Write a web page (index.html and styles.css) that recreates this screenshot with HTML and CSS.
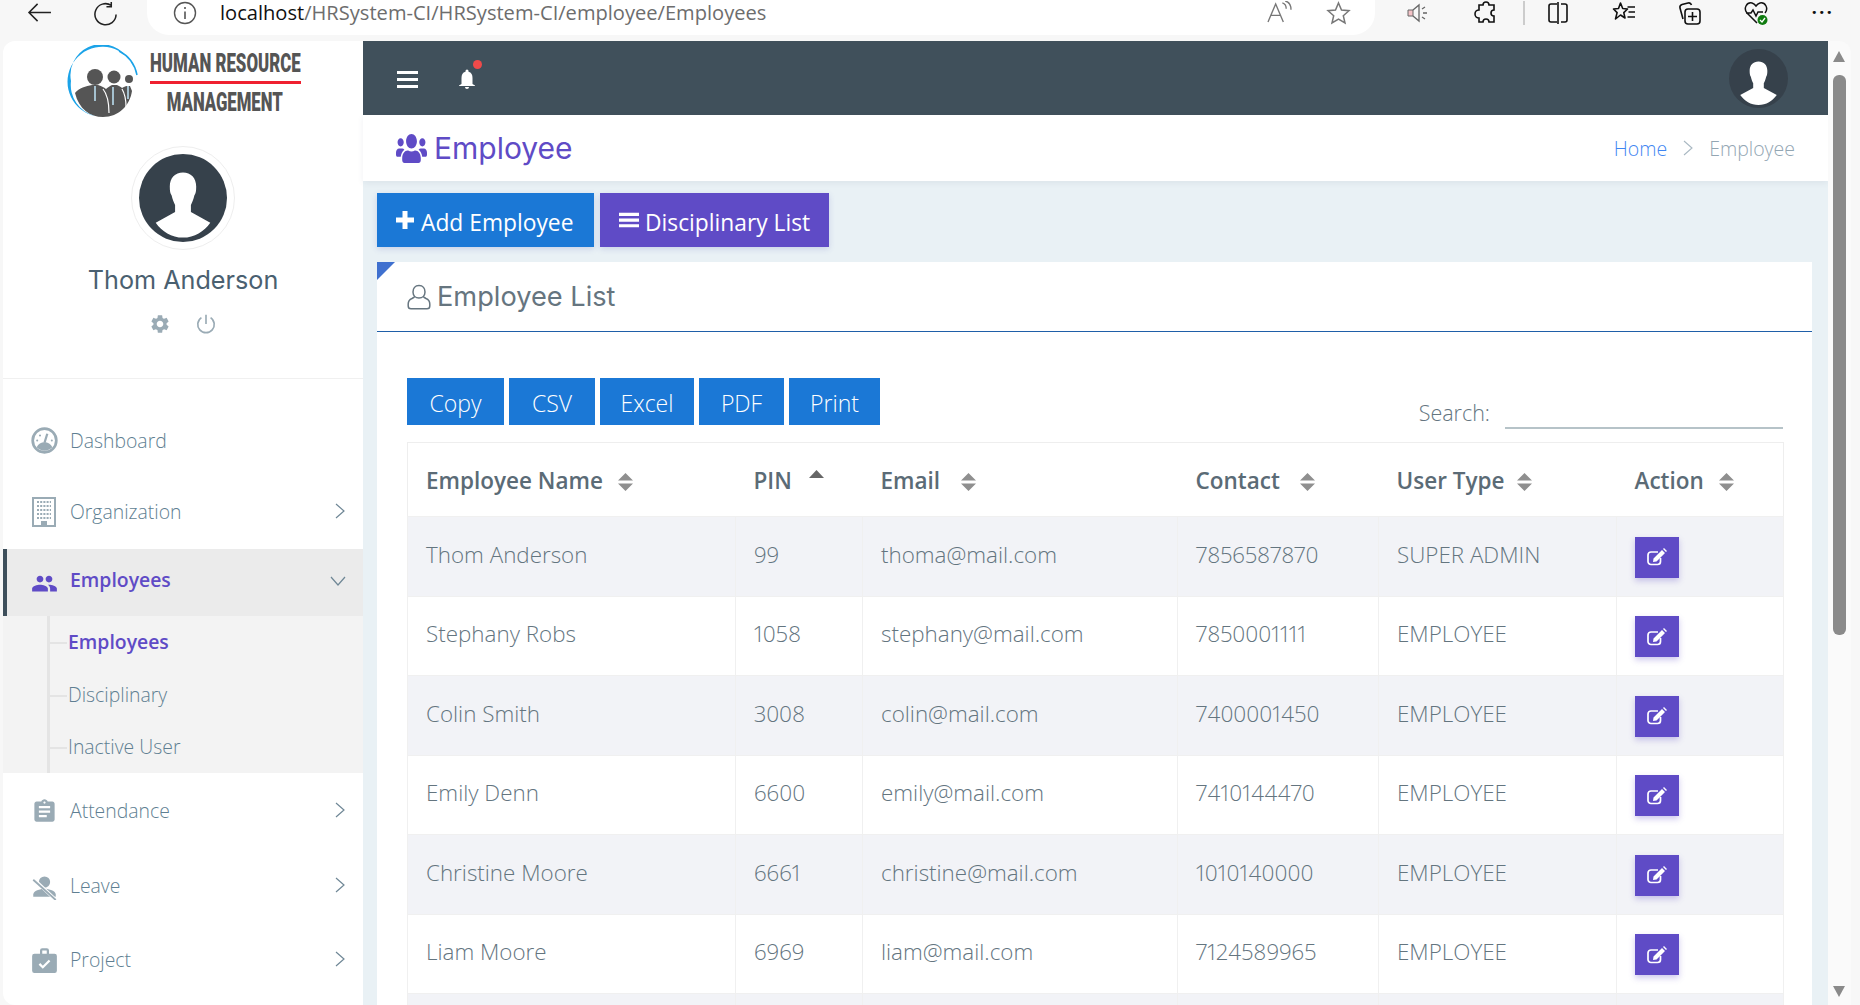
FILE: index.html
```html
<!DOCTYPE html>
<html lang="en">
<head>
<meta charset="utf-8">
<title>Employee</title>
<link rel="stylesheet" href="styles.css">
</head>
<body>
<svg class="defs" width="0" height="0" aria-hidden="true">
  <symbol id="silhouette" viewBox="0 0 100 100">
    <circle cx="50" cy="50" r="50" fill="#36414b"/>
    <path fill="#fff" d="M50 21c-9 0-15 6-15 16 0 5 .5 8 2 10 1 5 3 9 4 11v8L19 78c7 10 18 17 31 17s24-7 31-17L59 66v-8c1-2 3-6 4-11 1.500-2 2-5 2-10 0-10-6-16-15-16z"/>
  </symbol>
  <symbol id="sort" viewBox="0 0 15 18"><path fill="#8f8f8f" d="M7.500 0 15 7.500H0zM0 10.500h15L7.500 18z"/></symbol>
  <symbol id="chev-r" viewBox="0 0 12 18"><path fill="none" stroke="#6f8796" stroke-width="1.200" d="M2 2l8 7-8 7"/></symbol>
  <symbol id="edit" viewBox="0 0 20 18"><path fill="none" stroke="#fff" stroke-width="1.700" d="M13.500 10v3.500a3 3 0 0 1-3 3H4a3 3 0 0 1-3-3V7a3 3 0 0 1 3-3h7"/><path fill="#fff" d="M6.500 10.500 15 2l3 3-8.500 8.500-3.500.5zM16 1l1-1 3 3-1 1z"/></symbol>
</svg>

<header class="chrome">
  <svg class="chrome-icon back" viewBox="0 0 26 22"><path fill="none" stroke="#222" stroke-width="1.600" d="M25 11H2M11 2l-9 9 9 9"/></svg>
  <svg class="chrome-icon reload" viewBox="0 0 26 26"><path fill="none" stroke="#222" stroke-width="1.600" d="M19 3.500A11 11 0 1 0 24 13M19 0v5h-5"/></svg>
  <div class="address">
    <svg class="info" viewBox="0 0 24 24"><circle cx="12" cy="12" r="10.500" fill="none" stroke="#555" stroke-width="1.400"/><path stroke="#555" stroke-width="1.600" d="M12 10.500V18M12 6v2"/></svg>
    <span class="url"><span class="host">localhost</span>/HRSystem-CI/HRSystem-CI/employee/Employees</span>
    <svg class="addr-read" viewBox="0 0 26 24"><path fill="none" stroke="#777" stroke-width="1.400" d="M1 22 9 3l8 19M4 15h10M16 2c3 1 4 3 4 6M19 0c4 1 6 4 6 9"/></svg>
    <svg class="addr-star" viewBox="0 0 24 24"><path fill="none" stroke="#777" stroke-width="1.500" d="m12 2 3 7 7.500.7-5.700 5 1.700 7.300-6.500-3.900L5.500 22l1.700-7.300-5.700-5L9 9z"/></svg>
  </div>
  <div class="tools">
    <svg class="tool tool-first" viewBox="0 0 24 24"><path fill="#f3c2c6" stroke="#666" d="M3 9h5v6H3z"/><path fill="none" stroke="#666" stroke-width="1.300" d="m8 9 6-5v16l-6-5M17 8l3-2M18 12h4M17 16l3 2"/></svg>
    <svg class="tool" viewBox="0 0 24 24"><path fill="none" stroke="#111" stroke-width="1.600" d="M9 4a3 3 0 0 1 6 0h5v5a3 3 0 0 0 0 6v6h-5a3 3 0 0 0-6 0H5v-4a3 3 0 0 1 0-8V4z"/></svg>
    <span class="tool-sep"></span>
    <svg class="tool" viewBox="0 0 24 24"><path fill="none" stroke="#111" stroke-width="1.600" d="M11 3H5a2 2 0 0 0-2 2v14a2 2 0 0 0 2 2h6M15 3h4a2 2 0 0 1 2 2v14a2 2 0 0 1-2 2h-4M12 1v22"/></svg>
    <svg class="tool" viewBox="0 0 24 24"><path fill="none" stroke="#111" stroke-width="1.600" stroke-linejoin="round" d="m8.500 2 2.200 5.500 4.800.5-3.700 3.600 1.200 5.400-4.500-3-5 4 1.600-6.400L1.500 8l5-.5zM15.500 6H23M16.500 11H23M15.500 16H23"/></svg>
    <svg class="tool" viewBox="0 0 24 24"><path fill="none" stroke="#111" stroke-width="1.600" d="M5 18 2 7c-.5-2 .5-3 2-3.500L10 2c2-.5 3 .5 3.500 2"/><rect x="7" y="8" width="15" height="15" rx="3" fill="#f7f7f7" stroke="#111" stroke-width="1.600"/><path stroke="#111" stroke-width="1.600" d="M14.500 11v9M10 15.500h9"/></svg>
    <svg class="tool" viewBox="0 0 24 24"><path fill="none" stroke="#111" stroke-width="1.500" d="M13 22 3 12C-1 7 3 1 8 2c2 .5 3 1.500 4 3 1-1.500 2-2.500 4-3 5-1 9 5 5 10M2 12h5l2-3 3 6 2-4h5"/><circle cx="18.500" cy="19" r="5" fill="#107c10"/><path fill="none" stroke="#fff" stroke-width="1.300" d="m16 19 2 2 3-4"/></svg>
    <span class="tool-dots">&#8226;&#8226;&#8226;</span>
  </div>
</header>

<div class="window">
  <aside class="sidebar">
    <div class="brand">
      <svg class="logo-mark" viewBox="0 0 72 72">
        <circle cx="28" cy="32" r="8" fill="#555"/><circle cx="47" cy="32" r="6.500" fill="#555"/><circle cx="62" cy="34" r="4" fill="#555"/>
        <path fill="#555" d="M8 48c4-5 11-7 17-8h6c3 1 6 2 8 4 2-2 4-3 6-4h5c2 1 4 2 5 3 2-1 3-2 5-2h3l2 5c-2 14-13 26-29 26-13 0-24-8-28-24z"/>
        <path fill="none" stroke="#fff" stroke-width="1.200" d="M36 44c4 5 6 14 6 24M55 44c3 5 4 10 4 18"/>
        <path fill="none" stroke="#b9dcee" stroke-width="1.600" d="M28 41v15M46 42v18M61 41v13"/>
        <path fill="#1ba3e8" d="M58 10A35 35 0 1 0 28 71 32 32 0 0 1 4 36 31 31 0 0 1 58 10z"/>
        <path fill="none" stroke="#1ba3e8" stroke-width="1.500" d="M52 6c10 5 16 14 18 24"/>
      </svg>
      <svg class="logo-text" viewBox="0 0 151 76">
        <g transform="scale(.62 1)">
          <text class="logo-word" x="0" y="27" textLength="243" lengthAdjust="spacingAndGlyphs">HUMAN RESOURCE</text>
          <text class="logo-word" x="27" y="66" textLength="187" lengthAdjust="spacingAndGlyphs">MANAGEMENT</text>
        </g>
        <rect x="0" y="36" width="151" height="3" fill="#ef2030"/>
      </svg>
    </div>
    <div class="profile">
      <div class="avatar-ring"><svg class="avatar"><use href="#silhouette"/></svg></div>
      <div class="profile-name">Thom Anderson</div>
      <div class="profile-actions">
        <svg class="pa-icon" viewBox="0 0 24 24"><path fill="#9aabb5" d="M19.140 12.940c.04-.3.06-.61.06-.94 0-.32-.02-.64-.07-.94l2.030-1.580c.18-.14.23-.41.12-.61l-1.920-3.320c-.12-.22-.37-.29-.59-.22l-2.390.96c-.5-.38-1.030-.7-1.620-.94l-.36-2.540c-.04-.24-.24-.41-.48-.41h-3.840c-.24 0-.43.17-.47.41l-.36 2.540c-.59.24-1.130.57-1.620.94l-2.390-.96c-.22-.08-.47 0-.59.22L2.740 8.870c-.12.21-.08.47.12.61l2.030 1.580c-.05.3-.09.63-.09.94s.02.64.07.94l-2.030 1.580c-.18.14-.23.41-.12.61l1.920 3.320c.12.22.37.29.59.22l2.390-.96c.5.38 1.030.7 1.620.94l.36 2.540c.05.24.24.41.48.41h3.840c.24 0 .44-.17.47-.41l.36-2.540c.59-.24 1.130-.56 1.620-.94l2.390.96c.22.08.47 0 .59-.22l1.920-3.320c.12-.22.07-.47-.12-.61l-2.010-1.580zM12 15.600c-1.980 0-3.600-1.620-3.600-3.600s1.620-3.600 3.600-3.600 3.600 1.620 3.600 3.600-1.620 3.600-3.600 3.600z"/></svg>
        <svg class="pa-icon" viewBox="0 0 24 24"><path fill="none" stroke="#9aabb5" stroke-width="1.800" d="M7 5a9 9 0 1 0 10 0M12 2v10"/></svg>
      </div>
    </div>
    <nav class="menu">
      <a class="item item-first">
        <svg class="item-icon" viewBox="0 0 24 24"><circle cx="12" cy="12" r="10.500" fill="#fff" stroke="#9aabb5" stroke-width="2.400"/><path fill="#9aabb5" d="M5 18c1.500-3 4-4.500 7-4.500s5.500 1.500 7 4.500c-2 2-4.500 3-7 3s-5-1-7-3z"/><path stroke="#9aabb5" stroke-width="2" d="m12 14 2.500-8"/><path stroke="#9aabb5" stroke-width="1.800" stroke-linecap="round" d="M5.500 12h.01M8 7.500h.01M18.500 12h.01"/></svg>
        <span>Dashboard</span>
      </a>
      <a class="item item-org">
        <svg class="item-icon icon-org" viewBox="0 0 24 30" preserveAspectRatio="none"><path fill="#fff" stroke="#9aabb5" stroke-width="2" d="M1 1h22v28H1z"/><path stroke="#9aabb5" stroke-width="2" stroke-dasharray="2 1.200" d="M5 5h14M5 9h14M5 13h14M5 17h14M5 21h14"/><path fill="#9aabb5" d="M9 24h6v6H9z"/></svg>
        <span>Organization</span>
        <svg class="chev"><use href="#chev-r"/></svg>
      </a>
      <a class="item item-open">
        <svg class="item-icon" viewBox="0 0 24 24"><path fill="#5f4bc6" d="M16 11c1.660 0 2.990-1.340 2.990-3S17.660 5 16 5c-1.660 0-3 1.340-3 3s1.340 3 3 3zm-8 0c1.660 0 2.990-1.340 2.990-3S9.660 5 8 5C6.340 5 5 6.340 5 8s1.340 3 3 3zm0 2c-2.330 0-7 1.170-7 3.500V19h14v-2.500c0-2.330-4.670-3.500-7-3.500zm8 0c-.29 0-.62.02-.97.05 1.160.84 1.970 1.970 1.970 3.450V19h6v-2.500c0-2.330-4.670-3.500-7-3.500z"/></svg>
        <span>Employees</span>
        <svg class="chev-down" viewBox="0 0 18 12"><path fill="none" stroke="#6f8796" stroke-width="1.200" d="m2 2 7 8 7-8"/></svg>
      </a>
      <ul class="submenu">
        <li class="sub-active">Employees</li>
        <li>Disciplinary</li>
        <li>Inactive User</li>
      </ul>
      <a class="item item-after">
        <svg class="item-icon" viewBox="0 0 24 24"><path fill="#9aabb5" d="M19 3h-4.180C14.400 1.840 13.300 1 12 1c-1.300 0-2.400.84-2.820 2H5c-1.100 0-2 .9-2 2v14c0 1.100.9 2 2 2h14c1.100 0 2-.9 2-2V5c0-1.100-.9-2-2-2zm-7 0c.55 0 1 .45 1 1s-.45 1-1 1-1-.45-1-1 .45-1 1-1zm2 14H7v-2h7v2zm3-4H7v-2h10v2zm0-4H7V7h10v2z"/></svg>
        <span>Attendance</span>
        <svg class="chev"><use href="#chev-r"/></svg>
      </a>
      <a class="item item-after">
        <svg class="item-icon" viewBox="0 0 24 24"><circle cx="12" cy="8" r="5" fill="#9aabb5"/><path fill="#9aabb5" d="M2 21v-2c0-3 6-5 10-5s10 2 10 5v2z"/><path stroke="#fff" stroke-width="3" d="m2 5 20 19"/><path stroke="#9aabb5" stroke-width="1.600" d="m2 6 20 18"/></svg>
        <span>Leave</span>
        <svg class="chev"><use href="#chev-r"/></svg>
      </a>
      <a class="item item-after">
        <svg class="item-icon" viewBox="0 0 24 24"><path fill="#9aabb5" d="M3 6h5V3a2 2 0 0 1 2-2h4a2 2 0 0 1 2 2v3h5a2 2 0 0 1 2 2v13a2 2 0 0 1-2 2H3a2 2 0 0 1-2-2V8a2 2 0 0 1 2-2zm7-3v3h4V3z"/><path fill="none" stroke="#fff" stroke-width="2" d="m7.500 15 3 3 6-6"/></svg>
        <span>Project</span>
        <svg class="chev"><use href="#chev-r"/></svg>
      </a>
    </nav>
  </aside>

  <main class="main">
    <div class="topbar">
      <svg class="burger" viewBox="0 0 21 17"><path fill="#fff" d="M0 0h21v3H0zM0 7h21v3H0zM0 14h21v3H0z"/></svg>
      <span class="bell-wrap">
        <svg class="bell" viewBox="0 0 18 20"><path fill="#fff" d="M9 20c1.100 0 2-.9 2-2H7c0 1.100.9 2 2 2zm5.500-5V9c0-3.100-1-5.600-4-6.300V2a1.500 1.500 0 0 0-3 0v.7c-3 .7-4 3.200-4 6.300v6L1 16.500v.5h16v-.5z"/></svg>
        <span class="bell-dot"></span>
      </span>
      <svg class="top-avatar"><use href="#silhouette"/></svg>
    </div>
    <div class="page-head">
      <h1 class="page-title">
        <svg class="title-icon" viewBox="0 32 640 448" preserveAspectRatio="none"><path fill="#5f4bc6" d="M96 224c35.300 0 64-28.700 64-64s-28.700-64-64-64-64 28.700-64 64 28.700 64 64 64zm448 0c35.300 0 64-28.700 64-64s-28.700-64-64-64-64 28.700-64 64 28.700 64 64 64zm32 32h-64c-17.600 0-33.500 7.100-45.100 18.600 40.300 22.100 68.900 62 75.100 109.400h66c17.700 0 32-14.300 32-32v-32c0-35.300-28.700-64-64-64zm-256 0c61.900 0 112-50.100 112-112S381.900 32 320 32 208 82.100 208 144s50.100 112 112 112zm76.800 32h-8.300c-20.800 10-43.900 16-68.500 16s-47.600-6-68.500-16h-8.300C179.600 288 128 339.600 128 403.200V432c0 26.500 21.500 48 48 48h288c26.500 0 48-21.500 48-48v-28.800c0-63.600-51.600-115.200-115.200-115.200zm-223.700-13.400C161.500 263.100 145.600 256 128 256H64c-35.300 0-64 28.700-64 64v32c0 17.700 14.300 32 32 32h65.900c6.300-47.400 34.900-87.300 75.200-109.400z"/></svg>
        Employee
      </h1>
      <div class="crumbs">
        <a class="crumb-link">Home</a>
        <svg class="crumb-sep" viewBox="0 0 10 18"><path fill="none" stroke="#a9b8c2" stroke-width="1.100" d="m1 2 8 7-8 7"/></svg>
        <span class="crumb-cur">Employee</span>
      </div>
    </div>
    <div class="content">
      <div class="actions">
        <a class="btn btn-blue"><svg class="btn-ico" viewBox="0 0 20 20"><path fill="#fff" d="M7.500 1h5v6.500H19v5h-6.500V19h-5v-6.500H1v-5h6.500z"/></svg>Add Employee</a>
        <a class="btn btn-purple"><svg class="btn-ico" viewBox="0 0 22 18"><path fill="#fff" d="M0 1h22v3.500H0zM0 7.300h22v3.500H0zM0 13.600h22v3.500H0z"/></svg>Disciplinary List</a>
      </div>
      <section class="card">
        <span class="corner"></span>
        <div class="card-head">
          <svg class="card-ico" viewBox="0 0 24 26"><path fill="none" stroke="#66757f" stroke-width="1.500" d="M12 1.500c-4 0-6 3-6 6.500s2.500 6 6 6 6-2.500 6-6-2-6.500-6-6.500zM7.500 13 5 14.500c-2.500 1-3.800 3-3.800 5.500v2c0 1.500 1 2.800 2.800 2.800h16c1.800 0 2.800-1.300 2.800-2.800v-2c0-2.500-1.300-4.500-3.800-5.500L16.500 13"/></svg>
          <h2 class="card-title">Employee List</h2>
        </div>
        <div class="card-body">
          <div class="toolbar">
            <div class="export">
              <a class="ex-btn ex-copy">Copy</a>
              <a class="ex-btn ex-csv">CSV</a>
              <a class="ex-btn ex-excel">Excel</a>
              <a class="ex-btn ex-pdf">PDF</a>
              <a class="ex-btn ex-print">Print</a>
            </div>
            <label class="search"><span>Search:</span><span class="search-input"></span></label>
          </div>
          <table class="grid">
            <colgroup>
              <col class="c-name"><col class="c-pin"><col class="c-email"><col class="c-contact"><col class="c-type"><col class="c-action">
            </colgroup>
            <thead>
              <tr>
                <th>Employee Name<svg class="sort"><use href="#sort"/></svg></th>
                <th>PIN<svg class="sort-up" viewBox="0 0 15 8"><path fill="#666" d="M7.500 0 15 8H0z"/></svg></th>
                <th>Email<svg class="sort sort-email"><use href="#sort"/></svg></th>
                <th>Contact<svg class="sort sort-contact"><use href="#sort"/></svg></th>
                <th>User Type<svg class="sort sort-type"><use href="#sort"/></svg></th>
                <th>Action<svg class="sort"><use href="#sort"/></svg></th>
              </tr>
            </thead>
            <tbody>
              <tr><td>Thom Anderson</td><td>99</td><td>thoma@mail.com</td><td>7856587870</td><td>SUPER ADMIN</td><td><a class="edit"><svg class="edit-ico"><use href="#edit"/></svg></a></td></tr>
              <tr><td>Stephany Robs</td><td>1058</td><td>stephany@mail.com</td><td>7850001111</td><td>EMPLOYEE</td><td><a class="edit"><svg class="edit-ico"><use href="#edit"/></svg></a></td></tr>
              <tr><td>Colin Smith</td><td>3008</td><td>colin@mail.com</td><td>7400001450</td><td>EMPLOYEE</td><td><a class="edit"><svg class="edit-ico"><use href="#edit"/></svg></a></td></tr>
              <tr><td>Emily Denn</td><td>6600</td><td>emily@mail.com</td><td>7410144470</td><td>EMPLOYEE</td><td><a class="edit"><svg class="edit-ico"><use href="#edit"/></svg></a></td></tr>
              <tr><td>Christine Moore</td><td>6661</td><td>christine@mail.com</td><td>1010140000</td><td>EMPLOYEE</td><td><a class="edit"><svg class="edit-ico"><use href="#edit"/></svg></a></td></tr>
              <tr><td>Liam Moore</td><td>6969</td><td>liam@mail.com</td><td>7124589965</td><td>EMPLOYEE</td><td><a class="edit"><svg class="edit-ico"><use href="#edit"/></svg></a></td></tr>
              <tr><td></td><td></td><td></td><td></td><td></td><td></td></tr>
            </tbody>
          </table>
        </div>
      </section>
    </div>
  </main>

  <div class="scrollbar">
    <span class="sb-up"></span>
    <span class="sb-thumb"></span>
    <span class="sb-down"></span>
  </div>
</div>
</body>
</html>
```

FILE: styles.css
```css
* { box-sizing: border-box; }
html, body { margin: 0; height: 1005px; overflow: hidden; }
body {
  background: #f7f7f7;
  font-family: "Open Sans", "Liberation Sans", sans-serif;
  font-variant-numeric: proportional-nums;
  color: #6b7a85;
  display: flex;
  flex-direction: column;
}
.defs { position: absolute; }
a { text-decoration: none; }

/* browser chrome */
.chrome { height: 41px; flex: none; display: flex; align-items: flex-start; padding-left: 27px; }
.chrome-icon { flex: none; margin-top: 2px; }
.back { width: 25px; height: 21px; }
.reload { width: 25px; height: 25px; margin-left: 41px; }
.address {
  width: 1228px; height: 35px; margin-left: 29px; flex: none;
  background: #fff; border-radius: 0 0 22px 22px;
  display: flex; align-items: flex-start; padding-left: 26px;
}
.info { width: 24px; height: 24px; margin-top: 1px; }
.url { margin-left: 23px; font-size: 20.100px; line-height: 26px; color: #6d6d6d; width: 1047px; white-space: nowrap; }
.host { color: #111; }
.addr-read { width: 25px; height: 23px; margin-top: 1px; flex: none; }
.addr-star { width: 25px; height: 24px; margin-left: 34px; margin-top: 1px; flex: none; }
.tools { display: flex; align-items: flex-start; margin-left: 30px; }
.tool { width: 24px; height: 24px; margin-top: 1px; margin-right: 42px; flex: none; }
.tool-first { margin-right: 45px; }
.tool-sep { width: 2px; height: 24px; background: #ccc; margin: 1px 21px 0 -17px; }
.tool-dots { font-size: 11px; letter-spacing: 1px; color: #111; line-height: 26px; margin-left: 1px; font-family: "DejaVu Sans", sans-serif; }

/* window */
.window { flex: 1; min-height: 0; display: flex; margin-right: 9px; overflow: hidden; }

.sidebar {
  width: 360px; flex: none; margin-left: 3px; background: #fff;
  border-radius: 12px 0 0 12px; overflow: hidden;
}
.brand { height: 80px; display: flex; align-items: flex-start; padding: 4px 0 0 64px; }
.logo-mark { width: 72px; height: 72px; flex: none; }
.logo-text { width: 151px; height: 76px; margin: 0 0 0 11px; flex: none; }
.logo-word { font-family: "Roboto", sans-serif; font-weight: 900; font-size: 26px; fill: #555; }

.profile { height: 258px; border-bottom: 1px solid #f0f0f0; padding-top: 25px; display: flex; flex-direction: column; align-items: center; }
.avatar-ring { width: 104px; height: 104px; border: 1px solid #eee; border-radius: 50%; display: flex; align-items: center; justify-content: center; }
.avatar { width: 88px; height: 88px; }
.profile-name { font-family: "Inter", sans-serif; font-size: 25.200px; color: #4a6070; margin-top: 13px; line-height: 34px; }
.profile-actions { display: flex; gap: 24px; align-items: center; margin-top: 16px; }
.pa-icon { width: 22px; height: 22px; }

.menu { padding-top: 26px; }
.item {
  height: 72px; display: flex; align-items: center; position: relative;
  padding-left: 67px; font-size: 19.400px; font-weight: 300; color: #5f7f92;
}
.item-first { height: 70px; }
.item-org { height: 74px; padding-bottom: 1px; }
.item-icon { position: absolute; left: 28px; top: 50%; width: 27px; height: 27px; margin-top: -13px; }
.icon-org { left: 29px; width: 24px; height: 30px; margin-top: -15px; }
.item .chev { position: absolute; left: 331px; top: 50%; margin-top: -9px; width: 12px; height: 18px; }
.item-org .chev { margin-top: -10px; }
.item-open { height: 67px; background: #ebebeb; border-left: 4px solid #3e4f5b; padding-left: 63px; padding-bottom: 6px; color: #5f4bc6; font-weight: 600; }
.item-open .item-icon { left: 24px; }
.chev-down { position: absolute; left: 322px; top: 50%; margin-top: -8px; width: 18px; height: 12px; }
.item-after { height: 74.500px; padding-top: 1px; }
.item-after .item-icon { margin-top: -12px; }
.submenu {
  list-style: none; margin: 0; padding: 0; height: 157px; background: #f3f3f3;
  position: relative; font-size: 19.400px; font-weight: 300; color: #5f7f92;
}
.submenu::before { content: ""; position: absolute; left: 44px; top: 0; bottom: 0; width: 3px; background: #e4e4e4; }
.submenu li { height: 52.400px; display: flex; align-items: center; padding-left: 65px; position: relative; }
.submenu li::before { content: ""; position: absolute; left: 47px; top: 50%; width: 17px; height: 2px; background: #e4e4e4; }
.sub-active { color: #5f4bc6; font-weight: 600; padding-bottom: 2px; }

/* main */
.main { width: 1465px; flex: none; display: flex; flex-direction: column; min-height: 0; background: #e9f1f5; }
.topbar { height: 74px; flex: none; background: #40505b; display: flex; align-items: center; padding-left: 34px; padding-right: 40px; }
.burger { width: 21px; height: 17px; margin-top: 2px; }
.bell-wrap { position: relative; width: 18px; height: 20px; margin: 2px 0 0 40px; }
.bell { width: 18px; height: 20px; display: block; }
.bell-dot { position: absolute; left: 15px; top: -9px; width: 9px; height: 9px; border-radius: 50%; background: #ef4a4a; }
.top-avatar { width: 59px; height: 59px; margin-left: auto; }
.page-head {
  height: 66px; flex: none; background: #fff; display: flex; align-items: center;
  justify-content: space-between; padding: 0 33px 0 33px; box-shadow: 0 2px 6px rgba(60,80,100,.08); position: relative;
}
.page-title { margin: 0; display: flex; align-items: center; gap: 7px; font-family: "Inter", sans-serif; font-weight: 400; font-size: 30px; color: #5f4bc6; }
.title-icon { width: 31px; height: 29px; }
.crumbs { display: flex; align-items: center; font-size: 19.500px; font-weight: 300; }
.crumb-link { color: #3f86f2; }
.crumb-sep { width: 10px; height: 18px; margin: 0 16px 0 16px; }
.crumb-cur { color: #93a6b3; }

.content { flex: 1; min-height: 0; padding: 12px 16px 0 14px; overflow: hidden; }
.actions { display: flex; gap: 6px; }
.btn { height: 54px; display: flex; align-items: center; padding-top: 5px; font-size: 22.800px; color: #fff; font-weight: 400; box-shadow: 0 2px 6px rgba(60,70,180,.18); }
.btn-blue { width: 217px; background: #1b78d6; padding-left: 18px; }
.btn-purple { width: 229px; background: #5f4bc6; padding-left: 19px; }
.btn-ico { width: 20px; height: 20px; margin-right: 6px; flex: none; margin-top: -5px; }
.card { margin-top: 15px; background: #fff; position: relative; }
.corner { position: absolute; left: 0; top: 0; border-style: solid; border-width: 18px 18px 0 0; border-color: #3f70cf transparent transparent transparent; }
.card-head { height: 70px; border-bottom: 1px solid #1f5fa8; display: flex; align-items: center; padding-left: 30px; }
.card-ico { width: 24px; height: 28px; }
.card-title { margin: 0 0 0 6px; font-family: "Inter", sans-serif; font-size: 27.200px; font-weight: 400; color: #66757f; }
.card-body { padding: 46px 29px 0 30px; }
.toolbar { display: flex; justify-content: space-between; height: 64px; }
.export { display: flex; gap: 5px; height: 47px; }
.ex-btn { height: 47px; padding-top: 2px; background: #1b78d6; color: #fff; font-size: 23px; font-weight: 300; display: flex; align-items: center; justify-content: center; }
.ex-copy { width: 97px; }
.ex-csv { width: 86px; }
.ex-excel { width: 94px; }
.ex-pdf { width: 85px; }
.ex-print { width: 91px; }
.search { display: flex; align-items: flex-start; font-size: 21.500px; font-weight: 300; color: #64757f; line-height: 28px; padding-top: 21px; }
.search-input { width: 278px; height: 30px; border-bottom: 2px solid #b6c3c8; margin-left: 15px; }
.grid { width: 1376px; border-collapse: collapse; table-layout: fixed; border: 1px solid #eeeeee; }
.c-name { width: 328px; }
.c-pin { width: 127px; }
.c-email { width: 315px; }
.c-contact { width: 201px; }
.c-type { width: 238px; }
.c-action { width: 167px; }
.grid th { height: 74px; text-align: left; padding: 2px 0 0 18px; font-size: 22.500px; font-weight: 600; color: #5b6b76; white-space: nowrap; }
.grid td { height: 79.500px; padding: 0 0 4px 18px; font-size: 22.400px; font-weight: 300; color: #64757f; border: 1px solid #f0f0f0; white-space: nowrap; }
.grid tbody tr:nth-child(odd) td { background: #f2f3f7; }
.grid thead th { border-bottom: 1px solid #f0f0f0; }
.sort { width: 15px; height: 18px; margin-left: 15px; vertical-align: -2px; }
.sort-email { margin-left: 21px; }
.sort-contact { margin-left: 20px; }
.sort-type { margin-left: 13px; }
.sort-up { width: 15px; height: 8px; margin-left: 17px; vertical-align: 11px; }
.edit { width: 44px; height: 41px; margin-top: 6px; background: #5f4bc6; display: flex; align-items: center; justify-content: center; box-shadow: 0 3px 6px rgba(95,75,198,.3); }
.edit-ico { width: 20px; height: 18px; }

/* scrollbar */
.scrollbar { width: 23px; flex: none; background: #fafafa; border-radius: 0 12px 0 0; position: relative; }
.sb-up { position: absolute; left: 5px; top: 10px; border-style: solid; border-width: 0 6.500px 11px; border-color: transparent transparent #8a8a8a; }
.sb-thumb { position: absolute; left: 5px; top: 34px; width: 13px; height: 560px; background: #8a8a8a; border-radius: 6px; }
.sb-down { position: absolute; left: 5px; bottom: 8px; border-style: solid; border-width: 11px 6.500px 0; border-color: #8a8a8a transparent transparent; }
```
